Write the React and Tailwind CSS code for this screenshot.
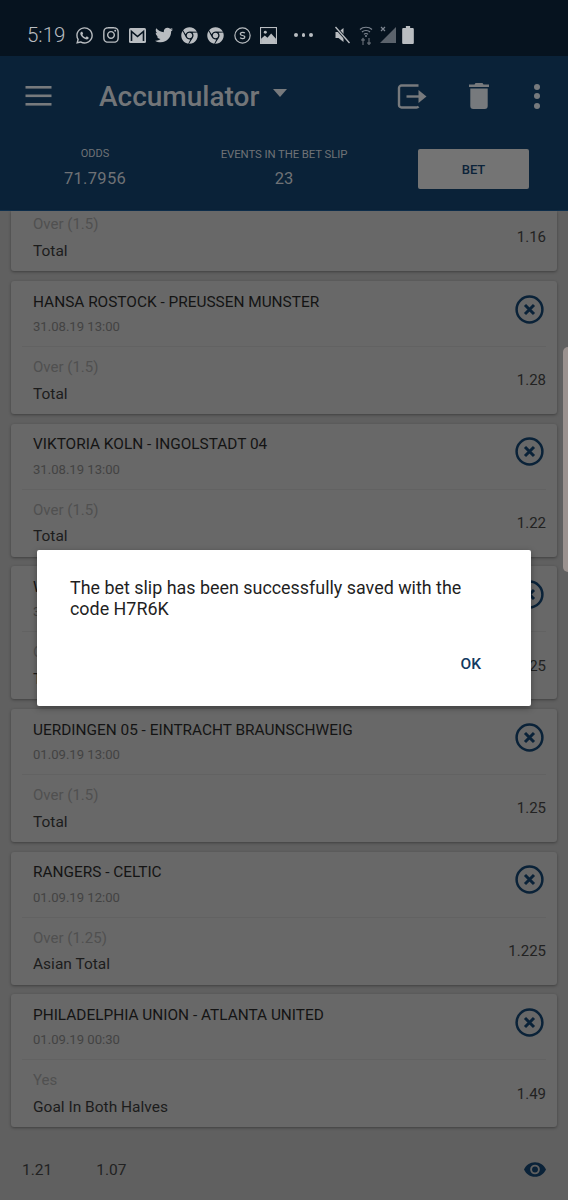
import React from "react";
import { FaWhatsapp, FaInstagram, FaTwitter, FaChrome } from "react-icons/fa";

const cards = [
  { t: "HANSA ROSTOCK - PREUSSEN MUNSTER", d: "31.08.19 13:00", o: "Over (1.5)", m: "Total", v: "1.28" },
  { t: "VIKTORIA KOLN - INGOLSTADT 04", d: "31.08.19 13:00", o: "Over (1.5)", m: "Total", v: "1.22" },
  { t: "WALDHOF MANNHEIM - CHEMNITZER", d: "31.08.19 13:00", o: "Over (1.5)", m: "Total", v: "1.25" },
  { t: "UERDINGEN 05 - EINTRACHT BRAUNSCHWEIG", d: "01.09.19 13:00", o: "Over (1.5)", m: "Total", v: "1.25" },
  { t: "RANGERS - CELTIC", d: "01.09.19 12:00", o: "Over (1.25)", m: "Asian Total", v: "1.225" },
  { t: "PHILADELPHIA UNION - ATLANTA UNITED", d: "01.09.19 00:30", o: "Yes", m: "Goal In Both Halves", v: "1.49" },
];

function CloseIcon() {
  return (
    <svg width="29" height="29" viewBox="0 0 29 29" fill="none" className="block">
      <circle cx="14.5" cy="14.5" r="12.9" stroke="#0a2238" strokeWidth="2.5" />
      <path d="M10 10l9 9M19 10l-9 9" stroke="#0a2238" strokeWidth="3" />
    </svg>
  );
}

function Selection({ o, m, v }) {
  return (
    <div className="flex items-center justify-between pl-[22px] pr-[11px]">
      <div>
        <div className="text-[15px] leading-[20px] text-[#505050]">{o}</div>
        <div className="mt-[6.5px] text-[15.5px] leading-[20px] text-[#1c1c1c]">{m}</div>
      </div>
      <div className="text-[15px] leading-[20px] text-[#222222]">{v}</div>
    </div>
  );
}

function Card({ t, d, o, m, v }) {
  return (
    <div className="mx-[11px] h-[133px] rounded-[3px] bg-[#686868] shadow-[0_1px_3px_rgba(0,0,0,0.35)]">
      <div className="flex h-[65px] items-start justify-between pl-[22px] pr-[13px] pt-[10.5px]">
        <div>
          <div className="text-[15.4px] font-[450] leading-[20px] text-[#141414]">{t}</div>
          <div className="mt-[6.5px] text-[13.1px] leading-[18px] text-[#434343]">{d}</div>
        </div>
        <div className="mt-[3px]"><CloseIcon /></div>
      </div>
      <div className="mx-[11px] h-px bg-[#626262]" />
      <div className="pt-[10px]"><Selection o={o} m={m} v={v} /></div>
    </div>
  );
}

function Gmail() {
  return (
    <svg width="17" height="15" viewBox="0 0 17 15" fill="none" className="block">
      <rect width="17" height="15" rx="1.5" fill="#b9bdc1" />
      <path d="M2.500 13V3.500l6 5 6-5V13" stroke="#06131f" strokeWidth="1.6" fill="none" />
    </svg>
  );
}

function Skype() {
  return (
    <svg width="17" height="17" viewBox="0 0 16 16" fill="none" className="block">
      <circle cx="8" cy="8" r="7.2" stroke="#b9bdc1" strokeWidth="1.1" />
      <path d="M10.200 5.800C9.600 5 7 4.700 6.200 5.700c-.9 1.300.6 2 1.900 2.300 1.400.3 2.600 1 1.800 2.200-.8 1.100-3.400.8-4.100-.2" stroke="#b9bdc1" strokeWidth="1.2" />
    </svg>
  );
}

function PictureIcon() {
  return (
    <svg width="17" height="17" viewBox="0 0 16 16" className="block">
      <rect x="0.5" y="0.5" width="15" height="15" fill="#06131f" stroke="#b9bdc1" />
      <circle cx="5" cy="5" r="1.4" fill="#b9bdc1" />
      <path d="M1 15v-4l3.500-3 2.500 2 3.500-4 4.500 5v4z" fill="#b9bdc1" />
    </svg>
  );
}

function StatusBar() {
  return (
    <div className="flex h-[56px] items-start bg-[#06131f] pl-[27px] pt-[25px] text-[#b9bdc1]">
      <div className="w-[39px] text-[20.5px] font-light leading-[20px]">5:19</div>
      <div className="ml-[9px] flex h-[20px] items-center">
        <FaWhatsapp size={19} />
        <FaInstagram size={18} className="ml-[8px]" />
        <span className="ml-[9px]"><Gmail /></span>
        <FaTwitter size={18} className="ml-[9px]" />
        <FaChrome size={17} className="ml-[8px]" />
        <FaChrome size={17} className="ml-[9px]" />
        <span className="ml-[10px]"><Skype /></span>
        <span className="ml-[9px]"><PictureIcon /></span>
        <div className="ml-[17px] flex gap-[4px]">
          <span className="h-[3.5px] w-[3.5px] rounded-full bg-[#b9bdc1]" />
          <span className="h-[3.5px] w-[3.5px] rounded-full bg-[#b9bdc1]" />
          <span className="h-[3.5px] w-[3.5px] rounded-full bg-[#b9bdc1]" />
        </div>
        <svg width="17" height="18" viewBox="0 0 16 18" className="ml-[21px]">
          <path d="M1 6h3l5-4v14l-5-4H1z" fill="#b9bdc1" />
          <path d="M1 1l14 16" stroke="#06131f" strokeWidth="3" />
          <path d="M1 1l14 16" stroke="#b9bdc1" strokeWidth="1.4" />
        </svg>
        <svg width="14" height="20" viewBox="0 0 14 20" fill="none" className="ml-[8px]">
          <path d="M1 4.500c3-3 9-3 12 0M3 7c2-2 6-2 8 0M5 9.300c1-1 3-1 4 0" stroke="#7d8590" strokeWidth="1.2" />
          <circle cx="7" cy="11" r="1" fill="#7d8590" />
          <path d="M4 20v-6M2.400 15.500L4 13.500l1.600 2M10 13v6M8.400 17.500L10 19.500l1.600-2" stroke="#5b636c" strokeWidth="1.3" />
        </svg>
        <svg width="16" height="18" viewBox="0 0 16 18" className="ml-[7px]">
          <path d="M16 1v16H0z" fill="#5b636c" />
          <path d="M1 1l4 4M5 1L1 5" stroke="#7d8590" strokeWidth="1.2" />
        </svg>
        <svg width="12" height="18" viewBox="0 0 11 17" className="ml-[6px]">
          <path d="M3.500 0h4v2H10a1 1 0 0 1 1 1v13a1 1 0 0 1-1 1H1a1 1 0 0 1-1-1V3a1 1 0 0 1 1-1h2.500z" fill="#b9bdc1" />
        </svg>
      </div>
    </div>
  );
}

function Header() {
  return (
    <div className="h-[155px] bg-[#0a2238] text-[#6f7276]">
      <div className="flex h-[80px] items-center">
        <svg width="27" height="20" viewBox="0 0 26 20" className="ml-[25px]" fill="#777a7d">
          <rect y="0" width="26" height="2.600" />
          <rect y="8.500" width="26" height="2.600" />
          <rect y="17" width="26" height="2.600" />
        </svg>
        <div className="ml-[47px] pt-[1px] text-[28px] font-medium leading-[34px] text-[#727578]">Accumulator</div>
        <svg width="14" height="8" viewBox="0 0 14 8" className="mb-[6px] ml-[14px]"><path d="M0 0h14L7 8z" fill="#777a7d" /></svg>
        <svg width="31" height="25" viewBox="0 0 30 25" fill="none" className="ml-[110px]">
          <path d="M21 1.500H4A2.500 2.500 0 0 0 1.500 4v17A2.500 2.500 0 0 0 4 23.500h15a2.500 2.500 0 0 0 2-1" stroke="#777a7d" strokeWidth="2.4" />
          <path d="M9 12.500h13" stroke="#777a7d" strokeWidth="2.4" />
          <path d="M21 6l8 6.500-8 6.500z" fill="#777a7d" />
        </svg>
        <svg width="20" height="26" viewBox="0 0 20 26" className="ml-[41px]" fill="#777a7d">
          <path d="M6.500 0h7l1 1.500H20v2.600H0V1.500h5.500z" />
          <path d="M1.300 5.500h17.400V23a3 3 0 0 1-3 3H4.300a3 3 0 0 1-3-3z" />
        </svg>
        <div className="ml-[45px] flex flex-col gap-[3.5px]">
          <span className="h-[6px] w-[6px] rounded-full bg-[#777a7d]" />
          <span className="h-[6px] w-[6px] rounded-full bg-[#777a7d]" />
          <span className="h-[6px] w-[6px] rounded-full bg-[#777a7d]" />
        </div>
      </div>
      <div className="flex h-[75px]">
        <div className="ml-[45px] w-[100px] pt-[10px] text-center">
          <div className="text-[11px] leading-[16px]">ODDS</div>
          <div className="mt-[6px] text-[16.5px] leading-[22px] tracking-[0.3px]">71.7956</div>
        </div>
        <div className="ml-[49px] w-[180px] pt-[10px] text-center">
          <div className="text-[11.400px] leading-[16px] tracking-[-0.1px]">EVENTS IN THE BET SLIP</div>
          <div className="mt-[6px] text-[16.5px] leading-[22px]">23</div>
        </div>
        <div className="ml-[44px] mt-[13px] flex h-[40px] w-[111px] items-center justify-center rounded-[2px] bg-[#747474] pt-[1px] text-[13px] font-medium text-[#0c2339]">BET</div>
      </div>
    </div>
  );
}

export default function App() {
  return (
    <div className="relative h-[1200px] w-[568px] overflow-hidden bg-[#606060]" style={{ fontFamily: "Roboto, sans-serif" }}>
      <StatusBar />
      <Header />
      <div className="shadow-[0_-1px_0_#0e2f4d]">
        <div className="mx-[11px] h-[60px] rounded-b-[3px] bg-[#686868] pt-[3px] shadow-[0_1px_3px_rgba(0,0,0,0.35)]">
          <Selection o="Over (1.5)" m="Total" v="1.16" />
        </div>
        <div className="mt-[10px] flex flex-col gap-[9.7px]">
          {cards.map((c) => <Card key={c.t} {...c} />)}
        </div>
        <div className="mt-[32px] flex items-center pl-[22px] pr-[22px] text-[15.5px] leading-[22px] text-[#222222]">
          <span>1.21</span>
          <span className="ml-[44px]">1.07</span>
          <svg width="22" height="15" viewBox="0 0 24 16" className="mb-[2px] ml-auto" fill="#0a2238">
            <path fillRule="evenodd" d="M12 0C6.500 0 2.200 3.300 0 8c2.200 4.700 6.500 8 12 8s9.800-3.300 12-8c-2.200-4.700-6.500-8-12-8zm0 13.300A5.300 5.300 0 1 1 12 2.700a5.300 5.300 0 0 1 0 10.600z" />
            <circle cx="12" cy="8" r="3.200" />
          </svg>
        </div>
      </div>

      <div className="absolute right-0 top-[347px] h-[225px] w-[5px] rounded-l-[5px] bg-[#9a918e]" />

      <div className="absolute left-[37px] top-[550px] h-[156px] w-[494px] rounded-[2px] bg-white shadow-[0_2px_6px_rgba(0,0,0,0.35)]">
        <p className="pl-[33px] pr-[50px] pt-[27px] text-[17.9px] leading-[21px] text-[#1f1f1f]">
          The bet slip has been successfully saved with the code H7R6K
        </p>
        <div className="absolute bottom-[32px] right-[50px] text-[15.5px] font-medium leading-[20px] text-[#12395f]">OK</div>
      </div>
    </div>
  );
}
